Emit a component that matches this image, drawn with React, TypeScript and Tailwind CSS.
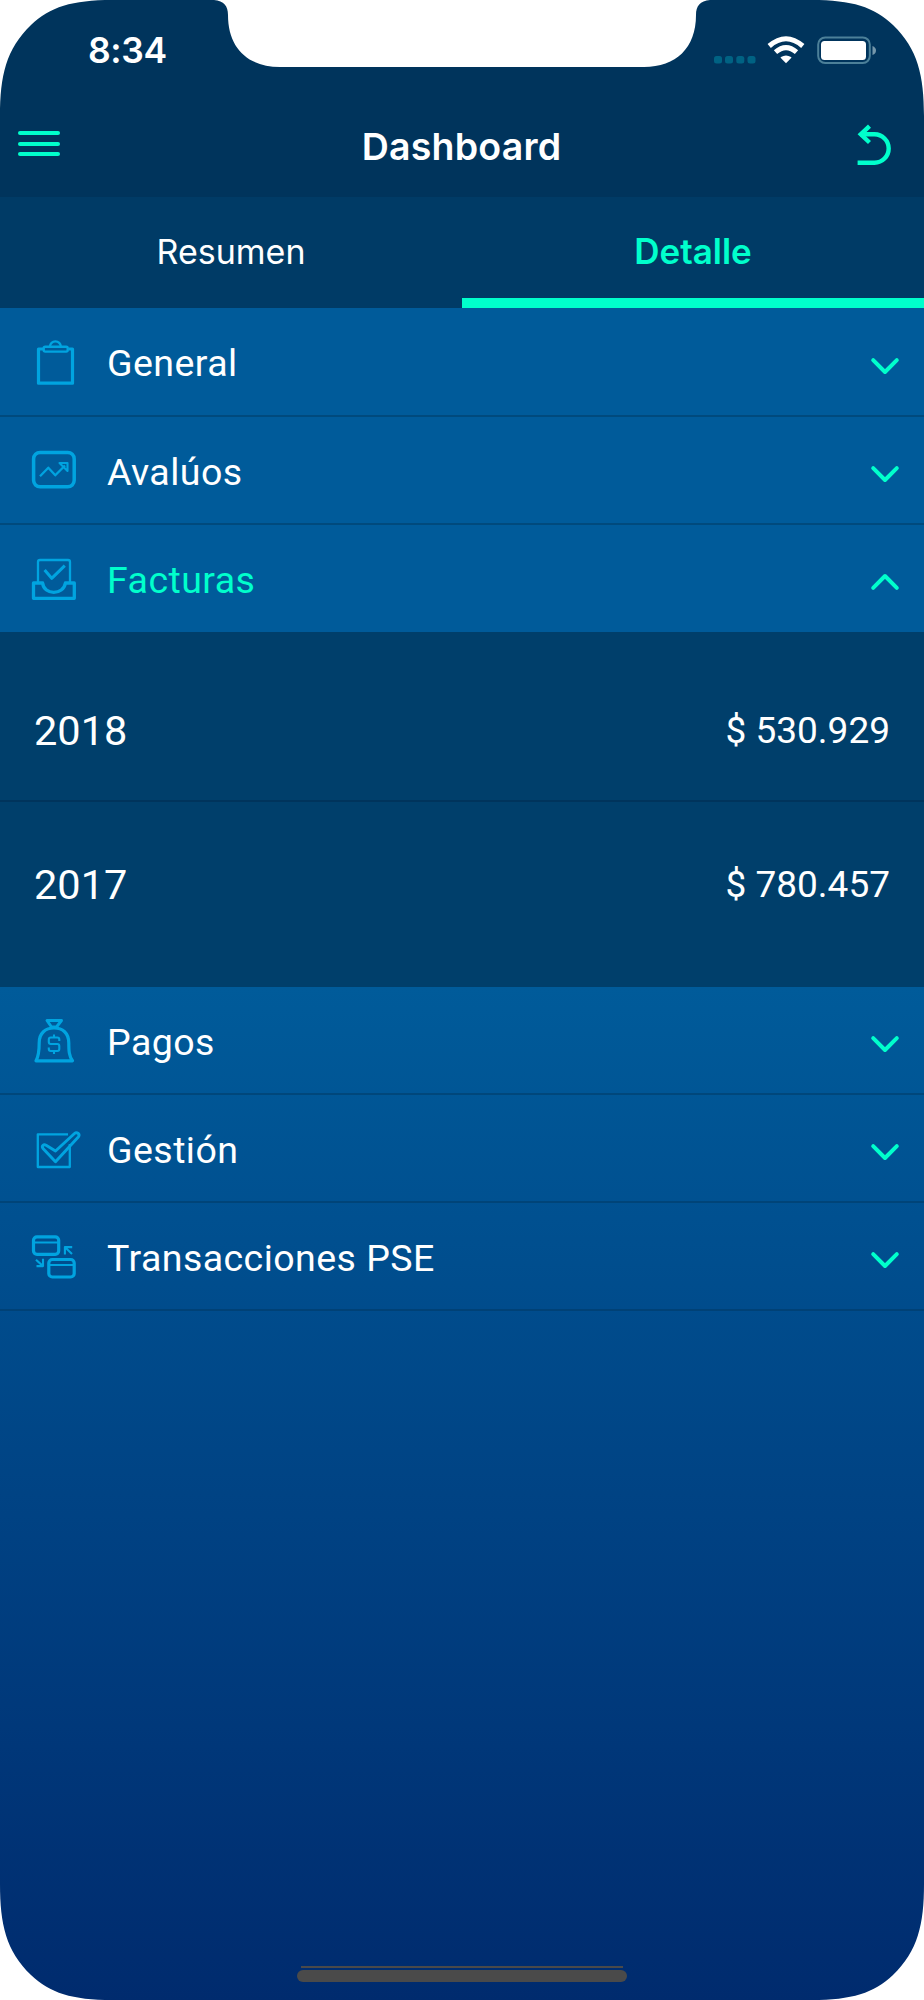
import { useState } from "react";
import type { ReactNode } from "react";
import clsx from "clsx";

const invoices = [
  { year: "2018", amount: "$ 530.929" },
  { year: "2017", amount: "$ 780.457" },
];

const ClipboardIcon = () => (
  <>
    <path d="M15 12H10.5V46.2H44.5V12H40.5" strokeWidth="3.2" />
    <rect x="15.7" y="9.8" width="24" height="4.8" rx="1.5" strokeWidth="2.4" />
    <path d="M22 9.5a5.4 5.2 0 0 1 10.8 0" strokeWidth="2.3" />
  </>
);

const TrendIcon = () => (
  <>
    <rect x="5.6" y="7.4" width="40.6" height="34.4" rx="6.5" strokeWidth="3.5" />
    <path d="M12 31.3l8.3-8.6 7 7.6L37 20.5" strokeWidth="2.3" />
    <path d="M31.5 18h8v8z" strokeWidth="2.1" />
  </>
);

const TrayIcon = () => (
  <>
    <path d="M10 29V9q0-2 2-2h28q2 0 2 2v20" strokeWidth="2.3" />
    <path d="M16.6 17l7.1 8.3L36.8 12.6" strokeWidth="3" />
    <path d="M5.5 30H14.6C16 42.5 35.5 42.5 37.4 30H46.3V45.3H5.5z" strokeWidth="3.3" />
  </>
);

const MoneyBagIcon = () => (
  <g transform="translate(0 -1)">
    <path d="M19 6.5h14.5L28.5 13h-5z" strokeWidth="2.9" />
    <path d="M8 46.8c3-5 3.2-10 3.2-18C11.2 19 17.5 14 26 14s14.8 5 14.8 15c0 8 .2 13 3.7 17.8z" strokeWidth="3.2" />
    <path
      d="M31.3 27v-1.5q0-2-2-2h-6.5q-2 0-2 2V28q0 2 2 2h6.5q2 0 2 2v3q0 2-2 2h-6.5q-2 0-2-2v-1.5M26 20.5v3M26 37v3"
      strokeWidth="2.1"
    />
  </g>
);

const CheckBoxIcon = () => (
  <g transform="translate(0 -1)">
    <path d="M40 12.3H9.8V45H41.8V22" strokeWidth="2.3" />
    <path
      d="M27.5 29L46.5 11.5c2.5-2.2 6 .8 3.8 3.5L27.5 39.8 15 26.5c-1.7-2.3.4-4.6 3.1-3.3z"
      strokeWidth="2.9"
    />
  </g>
);

const TransferIcon = () => (
  <g transform="translate(0 -1)">
    <rect x="5.5" y="6.8" width="25.2" height="17.5" rx="3.5" strokeWidth="3.2" />
    <path d="M5.5 12.5h25.2M20.8 35h25.8" strokeWidth="2" />
    <rect x="20.8" y="29.5" width="25.4" height="17.5" rx="3.5" strokeWidth="3.2" />
    <path d="M36.9 24.5v-7.4h7.3M37 17.3l7 6.7M15 28.8v7.3H8.5M15 36.1L8 29.8" strokeWidth="2.1" />
  </g>
);

type Section = { label: string; icon: ReactNode; height: string };

const sections: Section[] = [
  { label: "General", icon: <ClipboardIcon />, height: "h-[109px]" },
  { label: "Avalúos", icon: <TrendIcon />, height: "h-[108px]" },
  { label: "Facturas", icon: <TrayIcon />, height: "h-[107px]" },
  { label: "Pagos", icon: <MoneyBagIcon />, height: "h-[108px]" },
  { label: "Gestión", icon: <CheckBoxIcon />, height: "h-[108px]" },
  { label: "Transacciones PSE", icon: <TransferIcon />, height: "h-[108px]" },
];

function Chevron({ open }: { open: boolean }) {
  return (
    <svg
      width="30"
      height="20"
      viewBox="0 0 30 20"
      fill="none"
      stroke="#00ffcc"
      strokeWidth="4"
      strokeLinecap="round"
      strokeLinejoin="round"
      className={clsx("mt-1.5", open && "rotate-180")}
    >
      <path d="M3.2 4.2L15 16 26.8 4.2" />
    </svg>
  );
}

// White mask that gives the screen its rounded corners and notch
function DeviceFrame() {
  return (
    <svg
      className="absolute inset-0 pointer-events-none"
      width="924"
      height="2000"
      viewBox="0 0 924 2000"
      fill="#ffffff"
    >
      <path d="M0 0H112C72 0 50 7 31 25C6 49 0 76 0 116Z" />
      <path d="M924 0H812C852 0 874 7 893 25C918 49 924 76 924 116Z" />
      <path d="M0 2000H112C72 2000 50 1993 31 1975C6 1951 0 1924 0 1884Z" />
      <path d="M924 2000H812C852 2000 874 1993 893 1975C918 1951 924 1924 924 1884Z" />
      <path d="M214 0C224 1 228 6 228 15C228 48 248 67 280 67H644C676 67 696 48 696 15C696 6 700 1 710 0Z" />
    </svg>
  );
}

function StatusBar() {
  return (
    <div className="flex h-[100px] items-center justify-between pl-[88px] pr-[47px]">
      <span className="pt-[2px] text-[35.5px] leading-none font-semibold tracking-[-0.4px] text-white">8:34</span>
      <svg width="164" height="28" viewBox="713 36 164 28" fill="#ffffff">
        <g fill="#006283">
          <rect x="714" y="56" width="8" height="7.5" rx="2.5" />
          <rect x="725" y="56" width="8" height="7.5" rx="2.5" />
          <rect x="736.3" y="56" width="8" height="7.5" rx="2.5" />
          <rect x="747.5" y="56" width="8" height="7.5" rx="2.5" />
        </g>
        <path d="M786 63.2L780.8 58q-.6-.6.2-1.1 5-3 10 0 .8.5.2 1.1z" />
        <path d="M775.5 52.2Q786 43.2 796.5 52.2" fill="none" stroke="#ffffff" strokeWidth="5" />
        <path d="M769.2 46Q786 31.5 802.8 46" fill="none" stroke="#ffffff" strokeWidth="5" />
        <rect x="818.2" y="37.5" width="51.6" height="25.5" rx="7" fill="none" stroke="#4c8099" strokeWidth="2" />
        <rect x="821" y="41" width="45" height="19" rx="3.5" />
        <path d="M872.5 46q3.5 1.5 3.5 4.5t-3.5 4.5z" fill="#7597ab" />
      </svg>
    </div>
  );
}

export default function App() {
  const [tab, setTab] = useState("Detalle");
  const [open, setOpen] = useState("Facturas");

  return (
    <div className="relative flex h-[2000px] w-[924px] flex-col overflow-hidden bg-[linear-gradient(to_bottom,#005b9a_0px,#005b9a_987px,#002b6e_2000px)] font-['Roboto',sans-serif] text-white">
      <header className="h-[197px] shrink-0 bg-[#00345c] font-['Inter',sans-serif]">
        <StatusBar />
        <div className="flex h-[97px] items-start justify-between">
          <button className="ml-[18px] mt-[31px] flex flex-col gap-[6.5px]">
            <span className="h-1 w-[42px] rounded-full bg-[#00ffcc]" />
            <span className="h-1 w-[42px] rounded-full bg-[#00ffcc]" />
            <span className="h-1 w-[42px] rounded-full bg-[#00ffcc]" />
          </button>
          <h1 className="ml-[7px] mt-[24px] text-[37.5px] leading-[46px] font-semibold tracking-[0.2px]">Dashboard</h1>
          <button className="mr-[32px] mt-[22px]">
            <svg width="36" height="46" viewBox="857 122 36 46" fill="none" stroke="#00ffcc" strokeWidth="4.4">
              <path d="M870.5 126.2L861.8 134.3 870.5 142.5" />
              <path d="M861 134.3H875.5a14.2 14.2 0 0 1 0 28.4H858.6" />
            </svg>
          </button>
        </div>
      </header>

      <nav className="flex h-[111px] shrink-0 bg-[#003b66] font-['Inter',sans-serif] text-[34px]">
        {["Resumen", "Detalle"].map((name) => (
          <button
            key={name}
            onClick={() => setTab(name)}
            className={clsx(
              "flex flex-1 items-center justify-center border-b-[10px] pt-[7px]",
              tab === name
                ? "border-[#00ffcc] text-[35px] font-semibold text-[#00ffcc]"
                : "border-transparent"
            )}
          >
            {name}
          </button>
        ))}
      </nav>

      <main>
        {sections.map((section) => {
          const isOpen = open === section.label;
          return (
            <section key={section.label}>
              <button
                onClick={() => setOpen(isOpen ? "" : section.label)}
                className={clsx(
                  "flex w-full items-center border-b-2 pl-7 pr-6 pt-[2px]",
                  section.height,
                  isOpen ? "border-transparent" : "border-[#00355c]/45"
                )}
              >
                <svg
                  width="56"
                  height="52"
                  viewBox="0 0 56 52"
                  fill="none"
                  stroke="#00a4e0"
                  strokeLinejoin="round"
                >
                  {section.icon}
                </svg>
                <span
                  className={clsx(
                    "ml-[23px] flex-1 text-left text-[37.5px] leading-none tracking-[0.45px]",
                    isOpen ? "pt-[5px] text-[#00ffcc]" : "pt-[3px]"
                  )}
                >
                  {section.label}
                </span>
                <Chevron open={isOpen} />
              </button>
              {isOpen && (
                <div className="h-[355px] bg-[#003f6b] pt-4">
                  {invoices.map((invoice) => (
                    <div
                      key={invoice.year}
                      className="flex h-[154px] items-center justify-between border-b-2 border-[#00345c] pl-[34px] pr-[34px] pt-[13px] last:border-transparent"
                    >
                      <span className="text-[41.5px] leading-none">{invoice.year}</span>
                      <span className="text-[37px] leading-none">{invoice.amount}</span>
                    </div>
                  ))}
                </div>
              )}
            </section>
          );
        })}
      </main>

      <div className="mx-auto mb-[18px] mt-auto flex w-[330px] flex-col items-center">
        <div className="mb-[2px] h-[2px] w-[322px] bg-[#4a4a4a]" />
        <div className="h-[12.5px] w-full rounded-full bg-[#4a4a4a]" />
      </div>
      <DeviceFrame />
    </div>
  );
}
